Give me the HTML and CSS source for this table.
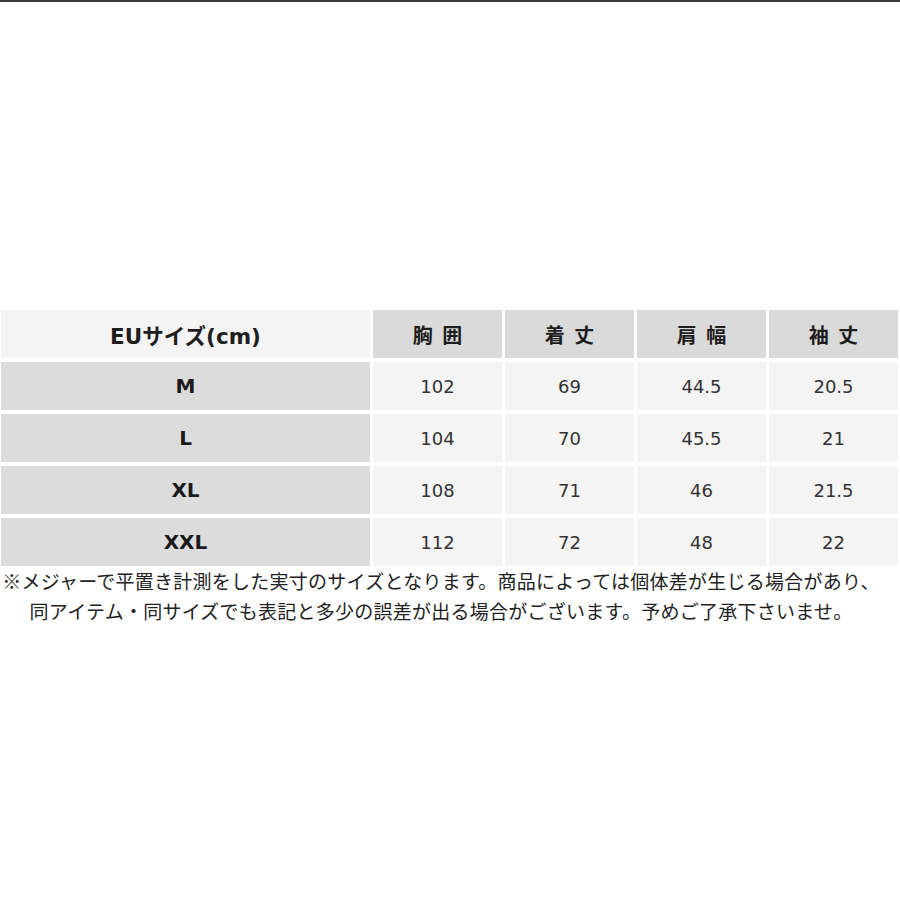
FILE: index.html
```html
<!DOCTYPE html>
<html lang="ja">
<head>
<meta charset="utf-8">
<link rel="stylesheet" href="styles.css">
</head>
<body>
<div class="topbar"></div>
<main class="content">
  <div class="size-table">
    <div class="cell head-first">EUサイズ(cm)</div>
    <div class="cell head">胸 囲</div>
    <div class="cell head">着 丈</div>
    <div class="cell head">肩 幅</div>
    <div class="cell head">袖 丈</div>

    <div class="cell size">M</div>
    <div class="cell val">102</div>
    <div class="cell val">69</div>
    <div class="cell val">44.5</div>
    <div class="cell val">20.5</div>

    <div class="cell size">L</div>
    <div class="cell val">104</div>
    <div class="cell val">70</div>
    <div class="cell val">45.5</div>
    <div class="cell val">21</div>

    <div class="cell size">XL</div>
    <div class="cell val">108</div>
    <div class="cell val">71</div>
    <div class="cell val">46</div>
    <div class="cell val">21.5</div>

    <div class="cell size">XXL</div>
    <div class="cell val">112</div>
    <div class="cell val">72</div>
    <div class="cell val">48</div>
    <div class="cell val">22</div>
  </div>
  <p class="note">※メジャーで平置き計測をした実寸のサイズとなります。商品によっては個体差が生じる場合があり、<br>同アイテム・同サイズでも表記と多少の誤差が出る場合がございます。予めご了承下さいませ。</p>
</main>
</body>
</html>
```
FILE: styles.css
```css
html, body {
  margin: 0;
  padding: 0;
  background: #ffffff;
}
body {
  width: 900px;
  height: 900px;
  overflow: hidden;
  font-family: "DejaVu Sans", "Noto Sans CJK JP", sans-serif;
}
.topbar {
  height: 2px;
  background: #3a3a3a;
}
.content {
  padding-top: 308px;
}
.size-table {
  display: grid;
  grid-template-columns: 369px repeat(4, 129px);
  grid-auto-rows: 48px;
  column-gap: 3px;
  row-gap: 4px;
  margin-left: 1px;
}
.cell {
  display: flex;
  align-items: center;
  justify-content: center;
}
.head-first {
  background: #f4f4f4;
  font-weight: bold;
  font-size: 21.5px;
  color: #1e1e1e;
  font-family: "DejaVu Sans", "Noto Sans CJK JP", sans-serif;
}
.head {
  background: #dadada;
  font-family: "Noto Sans CJK JP", sans-serif;
  font-weight: bold;
  font-size: 20px;
  color: #1e1e1e;
  word-spacing: 5px;
}
.size {
  background: #dcdcdc;
  font-weight: bold;
  font-size: 20px;
  color: #1a1a1a;
}
.val {
  background: #f4f4f4;
  font-size: 18px;
  color: #333333;
}
.note {
  margin: 0;
  width: 882px;
  text-align: center;
  font-family: "Noto Sans CJK JP", sans-serif;
  font-size: 19px;
  letter-spacing: 0.25px;
  line-height: 30px;
  color: #222222;
}
```
